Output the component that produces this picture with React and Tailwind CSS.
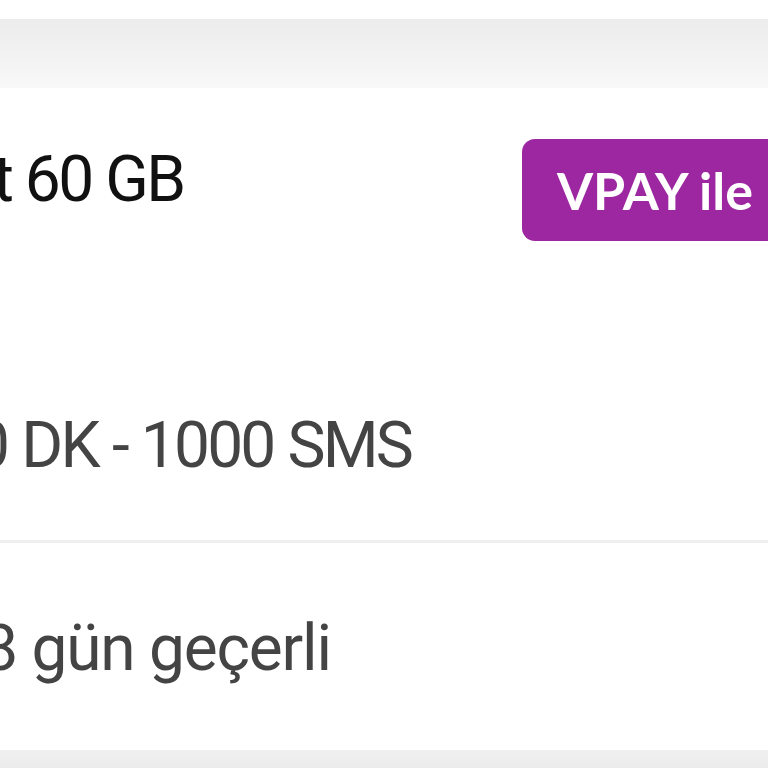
const App = () => {
  return (
    <div className="w-[768px] h-[768px] overflow-hidden bg-white font-['Roboto','Noto_Sans',sans-serif]">
      <div className="h-[19px] bg-white" />
      <div className="h-[69px] bg-gradient-to-b from-[#ececec] to-[#f8f8f8]" />

      {/* offer card */}
      <div className="bg-white">
        <div className="flex items-start justify-between h-[452px]">
          <div className="pt-[54px] ml-[-7px] text-[64px] leading-[76px] tracking-[-2.5px] text-[#111] whitespace-nowrap">
            t 60 GB
          </div>
          <div className="mt-[51px] w-[290px] h-[102px] shrink-0 rounded-[13px] bg-[#9c27a0] flex items-center pl-[35px] mr-[-44px]">
            <span className="font-['Lato',sans-serif] text-white font-bold text-[52px] leading-none whitespace-nowrap">VPAY ile</span>
          </div>
        </div>
        <div className="mt-[-132px] h-[132px] ml-[-26px] text-[64px] leading-[76px] tracking-[-2.8px] [word-spacing:1px] text-[#444] whitespace-nowrap">
          0 DK - 1000 SMS
        </div>
        <div className="h-[3px] bg-[#efefef]" />
        <div className="h-[207px] pt-[68px] ml-[-18px] text-[64px] leading-[76px] tracking-[-1.2px] text-[#444] whitespace-nowrap">
          8 gün geçerli
        </div>
      </div>
      <div className="h-[30px] bg-gradient-to-b from-[#f0f0f0] to-[#e8e8e8]" />
    </div>
  );
};

export default App;
